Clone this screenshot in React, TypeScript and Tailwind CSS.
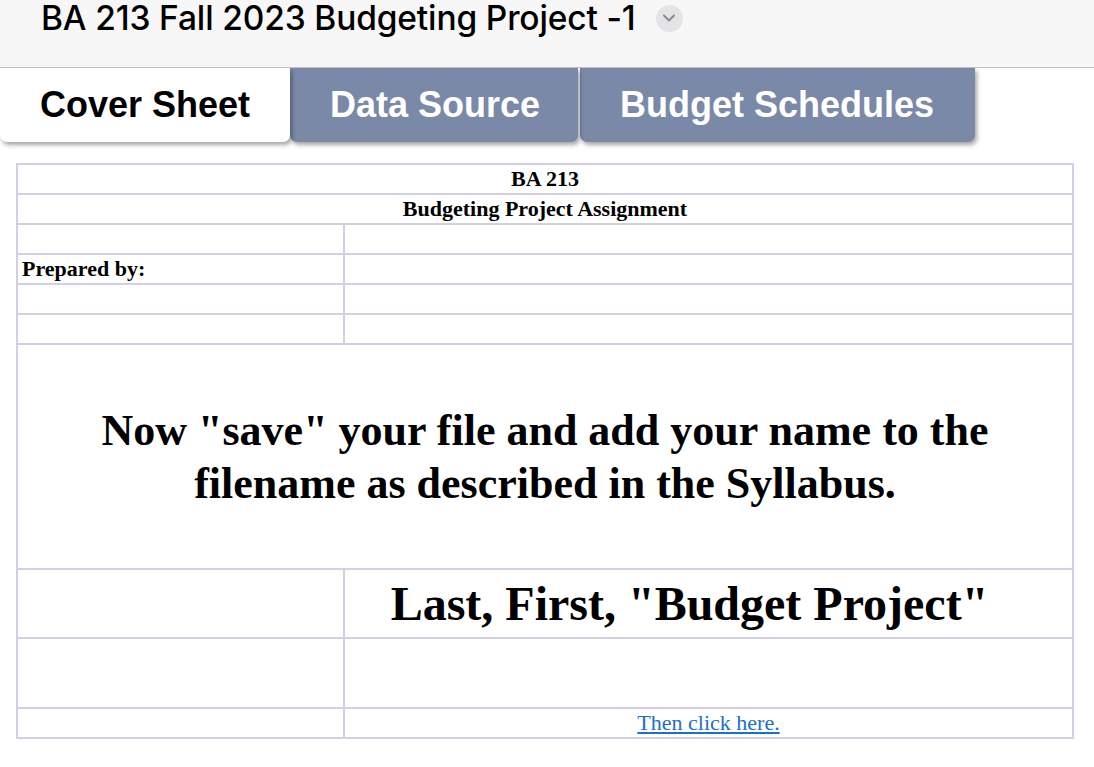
import { ChevronDown } from "lucide-react"

const cell = "border-2 border-[#d3d1e1] p-0"

export default function App() {
  return (
    <div className="min-h-[767px] w-[1094px] bg-white font-['Liberation_Sans',Arial,sans-serif]">
      {/* Title bar */}
      <div className="h-[68px] bg-[#f7f7f7] border-b border-[#c4c4c4]">
        <div className="flex items-center gap-[20px] pl-[41px] h-[36px]">
          <h1 className="font-['Inter',sans-serif] font-medium text-[33.5px] leading-[36px] text-black tracking-[-0.15px]">
            BA 213 Fall 2023 Budgeting Project -1
          </h1>
          <div className="w-[27px] h-[27px] rounded-full bg-[#e4e4e6] flex items-center justify-center">
            <ChevronDown className="w-[20px] h-[20px] text-[#8a8a8e]" strokeWidth={2.4} />
          </div>
        </div>
      </div>

      {/* Sheet tabs */}
      <div className="flex h-[74px] items-stretch">
        <div className="relative z-30 w-[290px] bg-white rounded-b-[7px] shadow-[2px_3px_4px_rgba(0,0,0,0.35)] flex items-center pl-[40px] text-[36px] font-bold text-black">
          Cover Sheet
        </div>
        <div className="relative z-20 w-[288px] bg-[#7b89a8] rounded-b-[7px] shadow-[2px_3px_4px_rgba(0,0,0,0.35)] flex items-center pl-[40px] text-[36px] font-bold text-white">
          Data Source
        </div>
        <div className="relative z-10 ml-[2px] w-[395px] bg-[#7b89a8] rounded-b-[7px] shadow-[2px_3px_4px_rgba(0,0,0,0.35)] flex items-center pl-[40px] text-[36px] font-bold text-white">
          Budget Schedules
        </div>
      </div>

      {/* Cover sheet grid */}
      <div className="pl-[16px] pt-[21px]">
        <table className="w-[1058px] border-collapse table-fixed font-['Liberation_Serif','Times_New_Roman',serif] text-black">
          <colgroup>
            <col className="w-[327px]" />
            <col />
          </colgroup>
          <tbody>
            <tr className="h-[30px]">
              <td colSpan={2} className={`${cell} text-center font-bold text-[22px] leading-none`}>
                BA 213
              </td>
            </tr>
            <tr className="h-[30px]">
              <td colSpan={2} className={`${cell} text-center font-bold text-[22px] leading-none`}>
                Budgeting Project Assignment
              </td>
            </tr>
            <tr className="h-[30px]">
              <td className={cell}></td>
              <td className={cell}></td>
            </tr>
            <tr className="h-[30px]">
              <td className={`${cell} pl-[4px] font-bold text-[22px] leading-none`}>Prepared by:</td>
              <td className={cell}></td>
            </tr>
            <tr className="h-[30px]">
              <td className={cell}></td>
              <td className={cell}></td>
            </tr>
            <tr className="h-[30px]">
              <td className={cell}></td>
              <td className={cell}></td>
            </tr>
            <tr className="h-[225px]">
              <td colSpan={2} className={`${cell} text-center font-bold text-[44px] leading-[53px]`}>
                Now "save" your file and add your name to the
                <br />
                filename as described in the Syllabus.
              </td>
            </tr>
            <tr className="h-[69px]">
              <td className={cell}></td>
              <td className={`${cell} text-center pr-[38px] font-bold text-[48px] leading-none`}>
                Last, First, "Budget Project"
              </td>
            </tr>
            <tr className="h-[70px]">
              <td className={cell}></td>
              <td className={cell}></td>
            </tr>
            <tr className="h-[30px]">
              <td className={cell}></td>
              <td className={`${cell} text-center text-[22px] leading-none`}>
                <a href="#" className="text-[#1d6fc8] underline">
                  Then click here.
                </a>
              </td>
            </tr>
          </tbody>
        </table>
      </div>
    </div>
  )
}
